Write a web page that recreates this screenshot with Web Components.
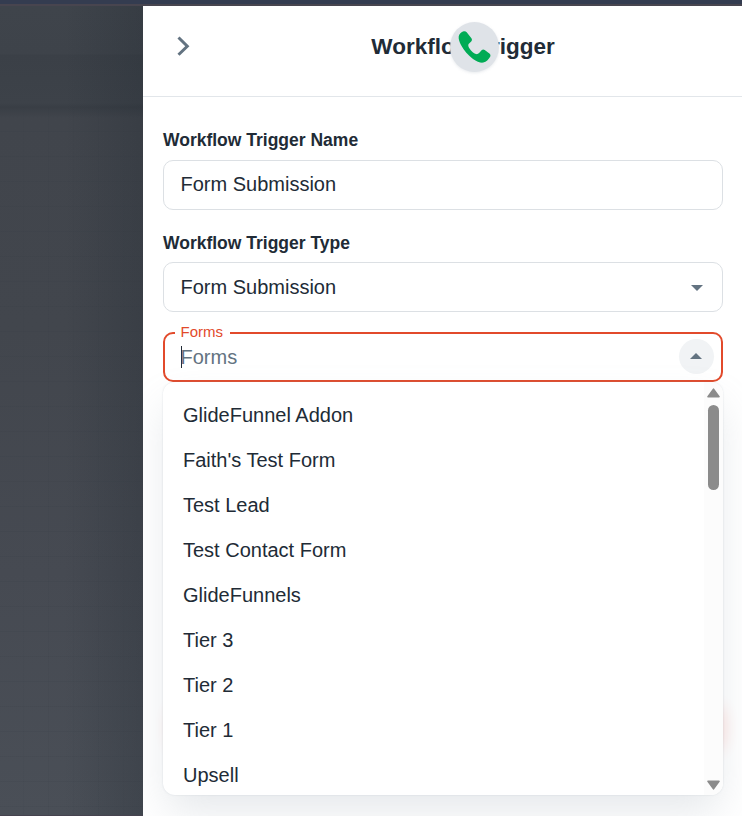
<!DOCTYPE html>
<html lang="en">
<head>
<meta charset="utf-8">
<title>Workflow Trigger</title>
<style>
html,body{margin:0;height:100%;overflow:hidden}
body{font-family:"Liberation Sans",Arial,sans-serif;color:#212b36}
</style>
</head>
<body>
<trigger-page>
  <drawer-header slot="header">Workflow Trigger</drawer-header>
  <form-field label="Workflow Trigger Name">Form Submission</form-field>
  <form-field label="Workflow Trigger Type" select>Form Submission</form-field>
  <forms-combobox label="Forms">
    <list-option>GlideFunnel Addon</list-option>
    <list-option>Faith's Test Form</list-option>
    <list-option>Test Lead</list-option>
    <list-option>Test Contact Form</list-option>
    <list-option>GlideFunnels</list-option>
    <list-option>Tier 3</list-option>
    <list-option>Tier 2</list-option>
    <list-option>Tier 1</list-option>
    <list-option>Upsell</list-option>
  </forms-combobox>
</trigger-page>
<script>
const define = (name, render) => customElements.define(name, class extends HTMLElement {
  constructor() {
    super();
    this.attachShadow({mode: 'open'});
  }
  connectedCallback() {
    this.shadowRoot.innerHTML = '<style>*{box-sizing:border-box}:host{box-sizing:border-box}</style>' + render(this);
  }
});

define('trigger-page', () => `
<style>
:host{display:grid;grid-template:6px minmax(0,1fr)/143px minmax(0,1fr);width:100vw;height:100vh;overflow:hidden}
.top{grid-column:1/3;background:linear-gradient(#343c50 0 4px,#48454f 4px)}
.canvas{display:grid;grid-template-rows:101px 1fr;
  background:linear-gradient(90deg,#0000 45%,#1f272f40),linear-gradient(#3f444b,#3e434a 48px,#3b4047 49px,#3d4249 97px,#393e45 101px,#41454c 112px,#42464d 40%,#464a52 70%,#4a4f57);border-bottom:1px solid #46434f}
.grid{grid-row:2;background:
  repeating-linear-gradient(90deg,#0000 0 23px,#2f374014 23px 24px,#0000 24px 25px),
  repeating-linear-gradient(#0000 0 24px,#2f37401c 24px 25px)}
.drawer{background:#fff;display:flex;flex-direction:column;min-width:0;overflow:hidden}
.body{display:flex;flex-direction:column;padding:32px 19px 0 20px;flex:1;min-height:0}
</style>
<div class="top"></div><div class="canvas"><div class="grid"></div></div>
<div class="drawer"><slot name="header"></slot><div class="body"><slot></slot></div></div>`);

define('drawer-header', () => `
<style>
:host{display:grid;grid-template-columns:80px 1fr 39px;align-items:center;height:91px;padding-bottom:9px;border-bottom:1px solid #e2e6ea;flex:none}
.back{display:block;margin:0 0 1px 34px}
h1{position:relative;margin:0;justify-self:center;font-size:22.5px;line-height:34px;font-weight:700;white-space:nowrap}
phone-badge{position:absolute;left:79px;top:-8px}
</style>
<svg class="back" width="13" height="20" viewBox="0 0 13 20"><path d="M1.5 1.5 10.3 10.2 1.5 18.8" fill="none" stroke="#637381" stroke-width="3"/></svg>
<h1><slot></slot><phone-badge></phone-badge></h1>`);

define('phone-badge', () => `
<style>
:host{display:block;width:49px;height:50px;border-radius:50%;background:#dfe3e8;box-shadow:0 1px 3px #919eab35}
svg{display:block}
</style>
<svg width="49" height="50" viewBox="0 0 49 50"><path fill="#00ab55" d="M8.7 14.5C9 12.3 11.2 9.9 13.7 9.3C14.9 9 16 9.5 16.7 10.3L21.4 16.2C22.2 17.2 22.1 18.5 21.2 19.4L18.6 22C17.8 23.2 18.5 25 19.7 26.7C21.3 29 23.4 31.1 25.9 32C27.1 32.4 28.2 31.9 29.1 31L31.6 28.2C32.5 27.3 33.7 27.2 34.7 28L39.4 31.4C40.6 32.4 40.8 33.7 40 35C38.5 37.4 36.4 40 33.3 40.6C30.6 41 26.8 39.8 23 37C18.3 33.3 13.9 28.5 11 23C9.4 19.9 8.4 17 8.7 14.5Z"/></svg>`);

define('form-field', el => `
<style>
:host{display:block;flex:none}
label{display:block;height:31px;line-height:23px;font-size:17.5px;font-weight:700}
.box{display:flex;align-items:center;justify-content:space-between;height:50px;border:1px solid #dce0e4;border-radius:10px;padding:0 19px 2px 16.5px;font-size:20px}
:host{margin-bottom:21px}
:host([select]){margin-bottom:20px}
:host([select]) label{line-height:25px}
:host([select]) .box{padding-bottom:0}
svg{margin-top:2px}
</style>
<label>${el.getAttribute('label')}</label>
<div class="box"><slot></slot>${el.hasAttribute('select') ? '<svg width="12" height="6" viewBox="0 0 12 6"><path d="M0 0H12L6 6Z" fill="#637381"/></svg>' : ''}</div>`);

define('forms-combobox', el => `
<style>
:host{display:block;position:relative;flex:none}
.input{position:relative;display:flex;align-items:center;height:50px;border:2px solid #e24a2b;border-radius:10px;padding:0 7px 0 16px;font-size:20px;color:#637381}
.label{position:absolute;left:10px;top:-11px;height:18px;line-height:18px;padding:0 7px 0 5.5px;background:#fff;color:#e24a2b;font-size:15px}
.caret{width:1px;height:22px;background:#212b36;margin-right:-1.5px}
.toggle{display:grid;place-items:center;width:35px;height:35px;border-radius:50%;background:#f1f3f5;margin:0 0 1px auto}
.toggle svg{margin:0 2px 1px 0}
.menu{position:absolute;left:0;right:0;top:50px;height:413px;display:flex;background:#fff;border-radius:12px;box-shadow:0 0 2px #919eab48,0 20px 40px -4px #919eab3d;overflow:hidden}
.list{flex:1;padding:11px 0 0}
.bar{display:flex;flex-direction:column;align-items:center;width:19px;background:#fcfcfc;padding:6px 0 5px}
.thumb{width:11px;height:85px;border-radius:6px;background:#8b8b8b;margin-top:7px}
.bar svg:last-child{margin-top:auto}
.glow{position:absolute;left:8px;right:0;top:375px;height:42px;border-radius:10px;box-shadow:0 0 16px #ff402a30}
</style>
<div class="input"><span class="label">${el.getAttribute('label')}</span><span class="caret"></span><span>Forms</span>
<span class="toggle"><svg width="12" height="6" viewBox="0 0 12 6"><path d="M0 6H12L6 0Z" fill="#637381"/></svg></span></div>
<div class="glow"></div>
<div class="menu"><div class="list"><slot></slot></div>
<div class="bar"><svg width="13" height="10" viewBox="0 0 13 10"><path d="M6.5 1.2 12 8.7H1Z" fill="#8b8b8b" stroke="#8b8b8b" stroke-width="1.6" stroke-linejoin="round"/></svg><div class="thumb"></div>
<svg width="13" height="10" viewBox="0 0 13 10"><path d="M6.5 8.8 12 1.3H1Z" fill="#8b8b8b" stroke="#8b8b8b" stroke-width="1.6" stroke-linejoin="round"/></svg></div></div>`);

define('list-option', () => `
<style>:host{display:block;height:45px;line-height:45px;padding-left:20px;font-size:20px;white-space:nowrap}</style><slot></slot>`);
</script>
</body>
</html>
